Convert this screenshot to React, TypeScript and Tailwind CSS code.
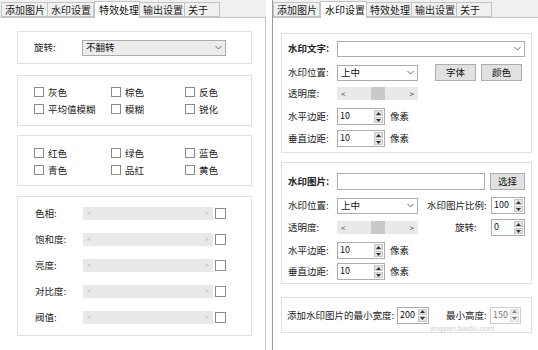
import React from 'react';

const font = { fontFamily: '"Noto Sans CJK SC", "Noto Sans", sans-serif' };

function Tabs({ active, offset }: { active: number; offset: string }) {
  const tabs = ['添加图片', '水印设置', '特效处理', '输出设置', '关于'];
  const widths = ['w-[47px]', 'w-[47px]', 'w-[46px]', 'w-[46px]', 'w-[36px]'];
  return (
    <div className={`flex h-[17px] items-end ${offset}`}>
      {tabs.map((t, i) =>
        i === active ? (
          <div
            key={t}
            className={`${widths[i]} h-[17px] -mb-px z-10 border border-b-0 border-[#c4c4c4] bg-white text-[10px] leading-[15px] pl-[4px] text-[#111]`}
          >
            {t}
          </div>
        ) : (
          <div
            key={t}
            className={`${widths[i]} h-[15px] border border-[#c4c4c4] bg-[#f0f0f0] text-[10px] leading-[13px] pl-[3px] text-[#222] -ml-px first:ml-0`}
          >
            {t}
          </div>
        )
      )}
    </div>
  );
}

function Check({ label, w }: { label: string; w: string }) {
  return (
    <div className={`flex items-center h-[14px] ${w}`}>
      <div className="w-[10px] h-[10px] border border-[#8a8a8a] bg-white" />
      <span className="ml-[4px] text-[9.5px] text-[#222]">{label}</span>
    </div>
  );
}

function Chevron() {
  return (
    <svg width="7" height="5" viewBox="0 0 7 5" className="shrink-0">
      <path d="M0.5 1 L3.5 4 L6.5 1" fill="none" stroke="#666" strokeWidth="1" />
    </svg>
  );
}

function Select({ w, text, gray }: { w: string; text: string; gray?: boolean }) {
  return (
    <div
      className={`${w} h-[16px] flex items-center justify-between border border-[#acacac] px-[3px] ${
        gray ? 'bg-[#ececec]' : 'bg-white'
      }`}
    >
      <span className="text-[9.5px] text-[#111]">{text}</span>
      <Chevron />
    </div>
  );
}

function Scroll({ w, thumb }: { w: string; thumb?: boolean }) {
  return (
    <div className={`${w} h-[13px] bg-[#e9e9e9] flex items-center justify-between px-[4px] relative`}>
      <span className={`text-[8px] leading-none ${thumb ? 'text-[#333]' : 'text-[#bbb]'}`}>&lt;</span>
      {thumb && <div className="absolute left-[34px] top-0 w-[14px] h-[13px] bg-[#c9c9c9]" />}
      <span className={`text-[8px] leading-none ${thumb ? 'text-[#333]' : 'text-[#bbb]'}`}>&gt;</span>
    </div>
  );
}

function Spin({ w, value, faint }: { w: string; value: string; faint?: boolean }) {
  return (
    <div className={`${w} h-[17px] flex border border-[#acacac] bg-white ${faint ? 'opacity-60' : ''}`}>
      <span className="flex-1 text-[9px] leading-[14px] pl-[2px] text-[#111]">{value}</span>
      <div className="w-[11px] flex flex-col gap-px p-px bg-white">
        <div className="flex-1 bg-[#e3e3e3] border border-[#c8c8c8] flex items-center justify-center">
          <svg width="5" height="3" viewBox="0 0 5 3"><path d="M0 3 L2.5 0 L5 3Z" fill="#333" /></svg>
        </div>
        <div className="flex-1 bg-[#e3e3e3] border border-[#c8c8c8] flex items-center justify-center">
          <svg width="5" height="3" viewBox="0 0 5 3"><path d="M0 0 L2.5 3 L5 0Z" fill="#333" /></svg>
        </div>
      </div>
    </div>
  );
}

function Btn({ w, label }: { w: string; label: string }) {
  return (
    <div className={`${w} h-[17px] border border-[#adadad] bg-[#e1e1e1] flex items-center justify-center text-[9.5px] text-[#111]`}>
      {label}
    </div>
  );
}

function Label({ w, children, bold }: { w?: string; children: React.ReactNode; bold?: boolean }) {
  return (
    <span className={`${w ?? ''} shrink-0 text-[9.5px] text-[#222] ${bold ? 'font-bold text-[#000]' : ''}`}>{children}</span>
  );
}

function SliderRow({ label }: { label: string }) {
  return (
    <div className="flex items-center h-[14px]">
      <Label w="w-[48px]">{label}</Label>
      <Scroll w="w-[130px]" />
      <div className="ml-[2px] w-[11px] h-[11px] border border-[#8a8a8a] bg-white" />
    </div>
  );
}

function LeftWindow() {
  return (
    <div className="w-[266px] h-[350px] flex flex-col bg-[#f0f0f0]">
      <Tabs active={2} offset="pl-[1px]" />
      <div className="flex-1 bg-white border-t border-r border-[#c4c4c4] pl-[17px] pt-[13px]">
        <div className="w-[235px] h-[33px] border border-[#e0e0e0] flex items-center pl-[16px]">
          <Label w="w-[48px]">旋转:</Label>
          <Select w="w-[144px]" text="不翻转" gray />
        </div>
        <div className="mt-[11px] w-[235px] h-[51px] border border-[#e0e0e0] pl-[16px] pt-[9px] flex flex-col gap-[3px]">
          <div className="flex">
            <Check label="灰色" w="w-[77px]" />
            <Check label="棕色" w="w-[74px]" />
            <Check label="反色" w="w-[60px]" />
          </div>
          <div className="flex">
            <Check label="平均值模糊" w="w-[77px]" />
            <Check label="模糊" w="w-[74px]" />
            <Check label="锐化" w="w-[60px]" />
          </div>
        </div>
        <div className="mt-[9px] w-[235px] h-[51px] border border-[#e0e0e0] pl-[16px] pt-[10px] flex flex-col gap-[3px]">
          <div className="flex">
            <Check label="红色" w="w-[77px]" />
            <Check label="绿色" w="w-[74px]" />
            <Check label="蓝色" w="w-[60px]" />
          </div>
          <div className="flex">
            <Check label="青色" w="w-[77px]" />
            <Check label="品红" w="w-[74px]" />
            <Check label="黄色" w="w-[60px]" />
          </div>
        </div>
        <div className="mt-[10px] w-[235px] h-[140px] border border-[#e0e0e0] pl-[17px] pt-[9px] flex flex-col gap-[12px]">
          <SliderRow label="色相:" />
          <SliderRow label="饱和度:" />
          <SliderRow label="亮度:" />
          <SliderRow label="对比度:" />
          <SliderRow label="阀值:" />
        </div>
      </div>
    </div>
  );
}

function RightWindow() {
  return (
    <div className="w-[266px] h-[350px] flex flex-col bg-[#f0f0f0] border-l border-[#9a9a9a]">
      <Tabs active={1} offset="pl-0" />
      <div className="flex-1 bg-white border-t border-[#c4c4c4] pl-[8px] pt-[15px]">
        <div className="w-[251px] h-[120px] border border-[#e0e0e0] pl-[6px] pt-[6px]">
          <div className="flex items-center h-[17px]">
            <Label w="w-[49px]" bold>水印文字:</Label>
            <Select w="w-[188px]" text="" />
          </div>
          <div className="mt-[7px] flex items-center h-[17px]">
            <Label w="w-[49px]">水印位置:</Label>
            <Select w="w-[81px]" text="上中" />
            <div className="ml-[17px]"><Btn w="w-[41px]" label="字体" /></div>
            <div className="ml-[5px]"><Btn w="w-[41px]" label="颜色" /></div>
          </div>
          <div className="mt-[6px] flex items-center h-[13px]">
            <Label w="w-[49px]">透明度:</Label>
            <Scroll w="w-[81px]" thumb />
          </div>
          <div className="mt-[8px] flex items-center h-[17px]">
            <Label w="w-[49px]">水平边距:</Label>
            <Spin w="w-[48px]" value="10" />
            <Label w="ml-[5px]">像素</Label>
          </div>
          <div className="mt-[5px] flex items-center h-[17px]">
            <Label w="w-[49px]">垂直边距:</Label>
            <Spin w="w-[48px]" value="10" />
            <Label w="ml-[5px]">像素</Label>
          </div>
        </div>
        <div className="mt-[9px] w-[251px] h-[122px] border border-[#e0e0e0] pl-[6px] pt-[9px]">
          <div className="flex items-center h-[18px]">
            <Label w="w-[49px]" bold>水印图片:</Label>
            <div className="w-[148px] h-[17px] border border-[#acacac] bg-white" />
            <div className="ml-[5px]"><Btn w="w-[35px]" label="选择" /></div>
          </div>
          <div className="mt-[7px] flex items-center h-[17px]">
            <Label w="w-[49px]">水印位置:</Label>
            <Select w="w-[81px]" text="上中" />
            <Label w="ml-[9px] w-[64px]">水印图片比例:</Label>
            <Spin w="w-[34px]" value="100" />
          </div>
          <div className="mt-[5px] flex items-center h-[17px]">
            <Label w="w-[49px]">透明度:</Label>
            <Scroll w="w-[81px]" thumb />
            <Label w="ml-[37px] w-[36px]">旋转:</Label>
            <Spin w="w-[34px]" value="0" />
          </div>
          <div className="mt-[6px] flex items-center h-[17px]">
            <Label w="w-[49px]">水平边距:</Label>
            <Spin w="w-[48px]" value="10" />
            <Label w="ml-[5px]">像素</Label>
          </div>
          <div className="mt-[4px] flex items-center h-[17px]">
            <Label w="w-[49px]">垂直边距:</Label>
            <Spin w="w-[48px]" value="10" />
            <Label w="ml-[5px]">像素</Label>
          </div>
        </div>
        <div className="mt-[13px] w-[251px] h-[36px] border border-[#e0e0e0] pl-[5px] flex items-center">
          <Label w="w-[110px]">添加水印图片的最小宽度:</Label>
          <Spin w="w-[32px]" value="200" />
          <Label w="ml-[17px] w-[44px]">最小高度:</Label>
          <Spin w="w-[31px]" value="150" faint />
        </div>
      </div>
      {/* faint site watermark under the last group */}
      <div className="absolute left-[430px] top-[325px] leading-none pointer-events-none">
        <span className="block text-[8px] text-[#cfcfcf] leading-none" style={{ fontFamily: '"Liberation Sans", sans-serif' }}>jingyan.baidu.com</span>
      </div>
    </div>
  );
}

export default function App() {
  return (
    <div className="w-[538px] h-[350px] flex bg-white overflow-hidden relative" style={font}>
      <LeftWindow />
      <div className="w-[6px]" />
      <RightWindow />
    </div>
  );
}
